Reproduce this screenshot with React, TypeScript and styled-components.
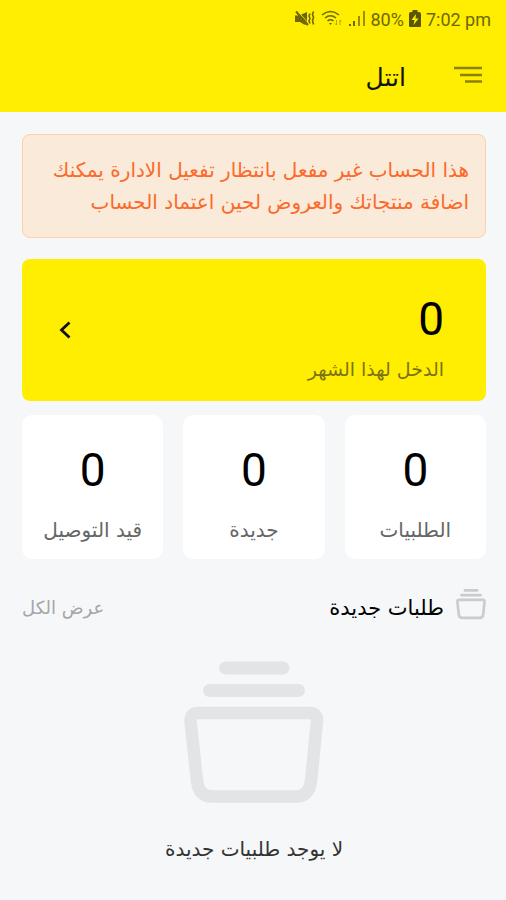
import React from "react";
import styled, { createGlobalStyle } from "styled-components";

const colors = {
  yellow: "#ffee00",
  page: "#f5f7f9",
  notice: "#faead9",
  noticeBorder: "#ffd0a3",
  noticeText: "#fb6a2c",
  olive: "#7b7312",
};

const GlobalStyle = createGlobalStyle`
  *, *::before, *::after { box-sizing: border-box; }
  body {
    margin: 0;
    background: ${colors.page};
    color: #111;
    font-family: "DejaVu Sans", sans-serif;
  }
  button { font: inherit; border: 0; background: none; padding: 0; cursor: pointer; }
`;

const Page = styled.div`
  min-height: 100vh;
  display: flex;
  flex-direction: column;
  background: ${colors.page};
`;

const Header = styled.header`
  background: ${colors.yellow};
`;

const StatusBar = styled.div`
  display: flex;
  align-items: center;
  justify-content: flex-end;
  gap: 5px;
  height: 38px;
  padding: 0 15px;
  color: #6e6708;
  font-family: Roboto, sans-serif;
  font-size: 18px;
`;

const AppBar = styled.div`
  display: flex;
  align-items: center;
  gap: 48px;
  height: 74px;
  padding: 0 24px;
`;

const MenuButton = styled.button`
  display: flex;
`;

const Title = styled.h1`
  margin: 0;
  padding-top: 6px;
  font-size: 25px;
  font-weight: 400;
  line-height: 32px;
`;

const Main = styled.main`
  display: flex;
  flex-direction: column;
  padding: 22px 20px 32px 22px;
`;

const Notice = styled.p`
  margin: 0 0 21px;
  padding: 19px 16px;
  border: 1px solid ${colors.noticeBorder};
  border-radius: 8px;
  background: ${colors.notice};
  color: ${colors.noticeText};
  font-size: 20px;
  line-height: 32px;
`;

const IncomeCard = styled.button`
  display: flex;
  align-items: center;
  justify-content: space-between;
  width: 100%;
  margin-bottom: 14px;
  padding: 0 42px 0 36px;
  border-radius: 8px;
  background: ${colors.yellow};
  text-align: start;
`;

const Figures = styled.span`
  display: flex;
  flex-direction: column;
  align-items: flex-start;
  gap: 6px;
  padding: 32px 0 16px;
`;

const Amount = styled.span`
  color: #000;
  font-family: Roboto, sans-serif;
  font-size: 46px;
  line-height: 56px;
`;

const Caption = styled.span<{ $tone: string; $size: number }>`
  color: ${(p) => p.$tone};
  font-size: ${(p) => p.$size}px;
  line-height: 32px;
  white-space: nowrap;
`;

const Stats = styled.div`
  display: grid;
  grid-template-columns: repeat(3, 1fr);
  gap: 20px;
  margin-bottom: 29px;
`;

const StatCard = styled.section`
  display: flex;
  flex-direction: column;
  align-items: center;
  gap: 16px;
  padding: 27px 8px 13px;
  border-radius: 10px;
  background: #fff;
`;

const SectionHead = styled.div`
  display: flex;
  align-items: flex-start;
  gap: 12px;
`;

const SectionTitle = styled.h2`
  flex: 1;
  margin: 0;
  padding-top: 4px;
  font-size: 21px;
  font-weight: 400;
  line-height: 32px;
  color: #000;
`;

const ShowAll = styled.a`
  padding-top: 4px;
  color: #a5a6a9;
  font-size: 18px;
  line-height: 32px;
  text-decoration: none;
`;

const Empty = styled.div`
  display: flex;
  flex-direction: column;
  align-items: center;
  gap: 30px;
  padding-top: 37px;
`;

const EmptyText = styled.p`
  margin: 0;
  color: #333;
  font-size: 20px;
  line-height: 32px;
`;

function BasketIcon({ width, height, color }: { width: number; height: number; color: string }) {
  return (
    <svg width={width} height={height} viewBox="0 0 140 142" fill="none" stroke={color} strokeLinecap="round" aria-hidden="true">
      <path d="M41.500 7H99M25.500 29.500H114.500" strokeWidth="13" />
      <path d="M14 52H126Q133.500 52 133 60L127 120Q125 135.500 112 135.500H28Q15 135.500 13 120L6.500 60Q6.500 52 14 52Z" strokeWidth="12.500" strokeLinejoin="round" />
    </svg>
  );
}

function MuteIcon() {
  return (
    <svg width="21" height="18" viewBox="0 0 21 18" fill="currentColor" aria-hidden="true">
      <path d="M0 5.500H4L12 2V15L9 14.500L5 12H0Z" />
      <path d="M2.500 1L14 14" stroke={colors.yellow} strokeWidth="1" />
      <path d="M1 1.500L13 15" stroke="currentColor" strokeWidth="2" />
      <path d="M15 3.500L14 6L15 8.500L14 11L15 13.500M18.500 1.500L17.500 4.500L18.500 7.500L17.500 10.500L18.500 14.500" fill="none" stroke="currentColor" strokeWidth="1.600" />
    </svg>
  );
}

function WifiIcon() {
  return (
    <svg width="22" height="18" viewBox="0 0 22 18" fill="none" stroke="currentColor" strokeWidth="1.500" aria-hidden="true">
      <path d="M1 5Q9.500 -2 18 5M4 8Q9.500 3.500 15 8M6.500 11Q9.500 8.500 12.500 11" />
      <path d="M8 13H11L9.500 15Z" fill="currentColor" stroke="none" />
      <path d="M15.500 10V15M14 13.500L15.500 15M19 15V10M20.500 11.500L19 10" strokeWidth="1" opacity="0.5" />
    </svg>
  );
}

function SignalIcon() {
  return (
    <svg width="18" height="18" viewBox="0 0 18 18" fill="currentColor" aria-hidden="true">
      <path d="M1 14H3V16H1ZM5 11H7V16H5Z" />
      <path d="M10 6H12V16H10ZM15 1H17V16H15Z" opacity="0.7" />
    </svg>
  );
}

function BatteryIcon() {
  return (
    <svg width="12" height="18" viewBox="0 0 12 18" aria-hidden="true">
      <path d="M3.500 0H8.500V2H10Q12 2 12 4V16Q12 17 11 17H1Q0 17 0 16V4Q0 2 2 2H3.500Z" fill="#5b5506" />
      <path d="M7 4L2.500 10H5.500L4.500 15L9.500 8.500H6.500Z" fill={colors.yellow} />
    </svg>
  );
}

const stats = [
  { label: "الطلبيات", value: 0 },
  { label: "جديدة", value: 0 },
  { label: "قيد التوصيل", value: 0 },
];

export default function App() {
  return (
    <Page dir="rtl" lang="ar">
      <GlobalStyle />
      <Header>
        <StatusBar dir="ltr">
          <MuteIcon />
          <WifiIcon />
          <SignalIcon />
          <span>80%</span>
          <BatteryIcon />
          <span>7:02 pm</span>
        </StatusBar>
        <AppBar>
          <MenuButton type="button" aria-label="القائمة">
            <svg width="28" height="18" viewBox="0 0 28 18" stroke="#8a8109" strokeWidth="2.500" aria-hidden="true">
              <path d="M0 2H28M6 9H28M11 15.500H28" />
            </svg>
          </MenuButton>
          <Title>اتتل</Title>
        </AppBar>
      </Header>
      <Main>
        <Notice>هذا الحساب غير مفعل بانتظار تفعيل الادارة يمكنك اضافة منتجاتك والعروض لحين اعتماد الحساب</Notice>
        <IncomeCard type="button">
          <Figures>
            <Amount>0</Amount>
            <Caption $tone={colors.olive} $size={19}>الدخل لهذا الشهر</Caption>
          </Figures>
          <svg width="14" height="18" viewBox="0 0 14 18" fill="none" stroke="#111" strokeWidth="2.800" aria-hidden="true">
            <path d="M11.500 1.500L3.500 9L11.500 16.500" />
          </svg>
        </IncomeCard>
        <Stats>
          {stats.map((s) => (
            <StatCard key={s.label}>
              <Amount>{s.value}</Amount>
              <Caption $tone="#666" $size={20}>{s.label}</Caption>
            </StatCard>
          ))}
        </Stats>
        <SectionHead>
          <BasketIcon width={30} height={32} color="#cbccce" />
          <SectionTitle>طلبات جديدة</SectionTitle>
          <ShowAll href="#all">عرض الكل</ShowAll>
        </SectionHead>
        <Empty>
          <BasketIcon width={140} height={142} color="#e3e4e6" />
          <EmptyText>لا يوجد طلبيات جديدة</EmptyText>
        </Empty>
      </Main>
    </Page>
  );
}
